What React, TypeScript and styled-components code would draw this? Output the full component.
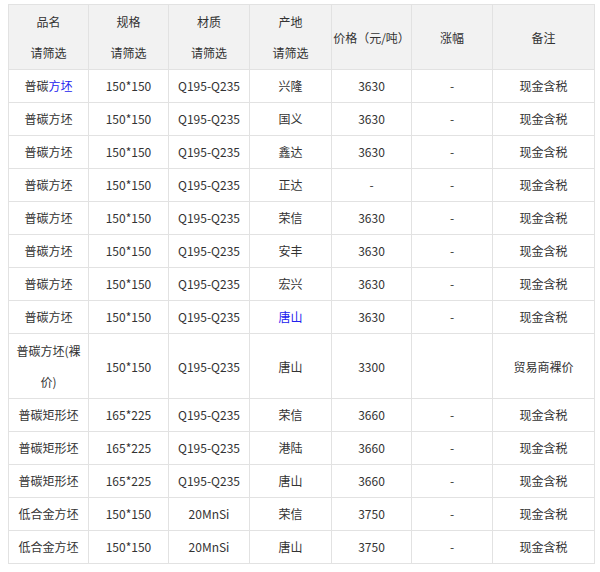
import React from "react";
import styled, { createGlobalStyle } from "styled-components";

const Global = createGlobalStyle`
  body { margin: 0; background: #fff; font-family: "Noto Sans CJK SC", "Noto Sans", sans-serif; }
`;

const Wrap = styled.div`
  padding: 4px 0 0 8px;
`;

const Table = styled.table`
  border-collapse: collapse;
  table-layout: fixed;
  width: 586px;
  font-size: 12px;
  color: #333;
`;

const Th = styled.th`
  background: #f2f2f2;
  border: 1px solid #e2e2e2;
  font-weight: normal;
  height: 64px;
  padding: 0;
  text-align: center;
  line-height: 31px;
`;

const Td = styled.td<{ $tall?: boolean }>`
  border: 1px solid #e2e2e2;
  height: ${(p) => (p.$tall ? 64 : 32)}px;
  padding: 0 4px;
  text-align: center;
  line-height: ${(p) => (p.$tall ? "31px" : "16px")};
`;

const Blue = styled.span`
  color: #2222ee;
`;

type Row = [React.ReactNode, string, string, React.ReactNode, string, string, string, boolean?];

const rows: Row[] = [
  [<>普碳<Blue>方坯</Blue></>, "150*150", "Q195-Q235", "兴隆", "3630", "-", "现金含税"],
  ["普碳方坯", "150*150", "Q195-Q235", "国义", "3630", "-", "现金含税"],
  ["普碳方坯", "150*150", "Q195-Q235", "鑫达", "3630", "-", "现金含税"],
  ["普碳方坯", "150*150", "Q195-Q235", "正达", "-", "-", "现金含税"],
  ["普碳方坯", "150*150", "Q195-Q235", "荣信", "3630", "-", "现金含税"],
  ["普碳方坯", "150*150", "Q195-Q235", "安丰", "3630", "-", "现金含税"],
  ["普碳方坯", "150*150", "Q195-Q235", "宏兴", "3630", "-", "现金含税"],
  ["普碳方坯", "150*150", "Q195-Q235", <Blue>唐山</Blue>, "3630", "-", "现金含税"],
  ["普碳方坯(裸价)", "150*150", "Q195-Q235", "唐山", "3300", "", "贸易商裸价", true],
  ["普碳矩形坯", "165*225", "Q195-Q235", "荣信", "3660", "-", "现金含税"],
  ["普碳矩形坯", "165*225", "Q195-Q235", "港陆", "3660", "-", "现金含税"],
  ["普碳矩形坯", "165*225", "Q195-Q235", "唐山", "3660", "-", "现金含税"],
  ["低合金方坯", "150*150", "20MnSi", "荣信", "3750", "-", "现金含税"],
  ["低合金方坯", "150*150", "20MnSi", "唐山", "3750", "-", "现金含税"],
];

const widths = [80, 80, 81, 82, 80, 81, 102];

export default function App() {
  return (
    <Wrap>
      <Global />
      <Table>
        <colgroup>
          {widths.map((w, i) => (
            <col key={i} style={{ width: w }} />
          ))}
        </colgroup>
        <thead>
          <tr>
            <Th>品名<br />请筛选</Th>
            <Th>规格<br />请筛选</Th>
            <Th>材质<br />请筛选</Th>
            <Th>产地<br />请筛选</Th>
            <Th>价格（元/吨）</Th>
            <Th>涨幅</Th>
            <Th>备注</Th>
          </tr>
        </thead>
        <tbody>
          {rows.map((r, i) => (
            <tr key={i}>
              {r.slice(0, 7).map((c, j) => (
                <Td key={j} $tall={!!r[7]}>{c as React.ReactNode}</Td>
              ))}
            </tr>
          ))}
        </tbody>
      </Table>
    </Wrap>
  );
}
